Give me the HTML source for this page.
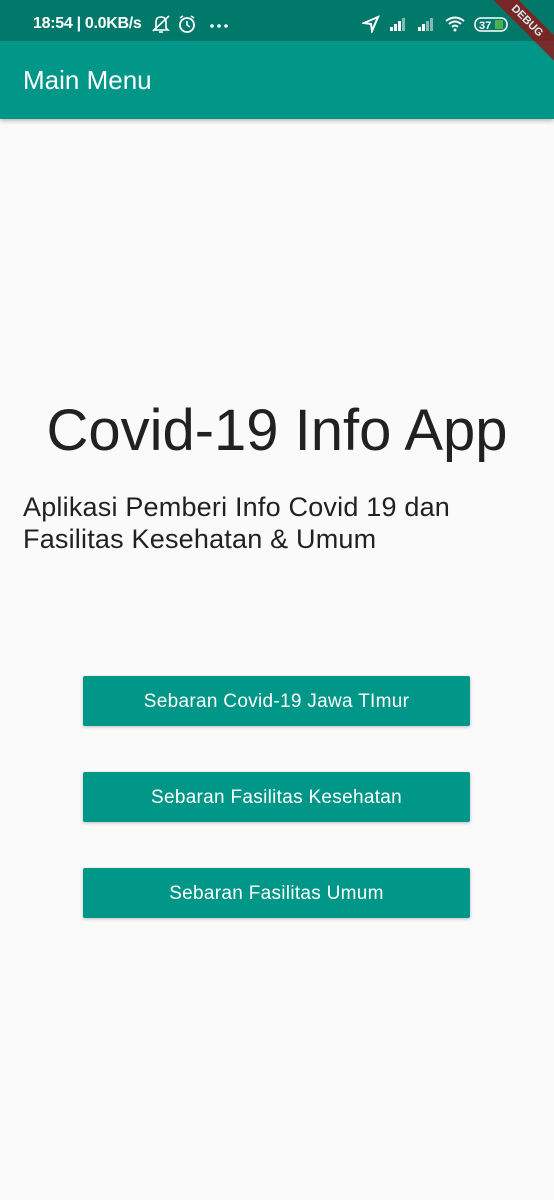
<!DOCTYPE html>
<html><head><meta charset="utf-8"><style>
*{margin:0;padding:0;box-sizing:border-box}
body{width:554px;height:1200px;background:#fafafa;font-family:"Liberation Sans",sans-serif;position:relative;overflow:hidden}
.sb{position:absolute;top:0;left:0;width:554px;height:41px;background:#00796b;color:#fff;font-weight:bold;font-size:16px}
.ab{position:absolute;top:41px;left:0;width:554px;height:78px;background:#009688;box-shadow:0 2px 4px rgba(0,0,0,.25)}
.ab span{position:absolute;left:23px;top:24px;color:#fff;font-size:26px}
.t{position:absolute;top:397px;left:0;width:554px;text-align:center;font-size:58px;color:#212121}
.s{position:absolute;top:491px;left:23px;font-size:27px;line-height:32px;color:#212121;letter-spacing:0.2px}
.b{position:absolute;left:83px;width:387px;height:50px;background:#009688;color:#fff;font-size:19px;text-align:center;line-height:52px;border-radius:2px;box-shadow:0 1px 3px rgba(0,0,0,.25);letter-spacing:0.3px}
.dbg{position:absolute;top:12px;right:-28px;width:110px;height:18px;background:#8b1a1a;opacity:.85;color:#fff;font-size:11px;font-weight:bold;text-align:center;line-height:18px;transform:rotate(45deg)}
</style></head><body>
<div class="sb">
<span style="position:absolute;left:33px;top:15px;letter-spacing:-0.3px">18:54 | 0.0KB/s</span>
<svg style="position:absolute;left:150px;top:14px" width="90" height="20">
<path d="M6 14 L6 8 Q6 3 11 3 Q16 3 16 8 L16 14 L18 16 L4 16 Z M9 18 L13 18" stroke="#fff" stroke-width="1.6" fill="none"/>
<path d="M3 17 L19 2" stroke="#fff" stroke-width="1.6"/>
<circle cx="37" cy="11" r="7" stroke="#fff" stroke-width="1.8" fill="none"/>
<path d="M37 7 L37 11 L40 13 M30 4 L33 2 M44 4 L41 2" stroke="#fff" stroke-width="1.6" fill="none"/>
<circle cx="62" cy="12" r="1.8" fill="#fff"/><circle cx="69" cy="12" r="1.8" fill="#fff"/><circle cx="76" cy="12" r="1.8" fill="#fff"/>
</svg>
<svg style="position:absolute;left:362px;top:15px" width="160" height="18">
<path d="M2 8 L16 2 L10 16 L9 9 Z" fill="none" stroke="#fff" stroke-width="2"/>
<rect x="28" y="12" width="3" height="4" fill="#fff"/><rect x="32" y="9" width="3" height="7" fill="#fff"/><rect x="36" y="6" width="3" height="10" fill="#fff"/><rect x="40" y="3" width="3" height="13" fill="#fff" opacity=".5"/>
<rect x="56" y="12" width="3" height="4" fill="#fff"/><rect x="60" y="9" width="3" height="7" fill="#fff"/><rect x="64" y="6" width="3" height="10" fill="#fff" opacity=".5"/><rect x="68" y="3" width="3" height="13" fill="#fff" opacity=".5"/>
<path d="M84 6 Q93 -1 102 6 M87 9 Q93 4 99 9 M90 12 Q93 9 96 12" stroke="#fff" stroke-width="2" fill="none"/><circle cx="93" cy="15" r="1.5" fill="#fff"/>
<rect x="113" y="3" width="32" height="13" rx="6" fill="none" stroke="#fff" stroke-width="1.5"/>
<text x="117" y="14" fill="#fff" font-size="11" font-family="Liberation Sans" font-weight="bold">37</text>
<rect x="133" y="5" width="8" height="9" fill="#4caf50"/>
</svg>
</div>
<div class="ab"><span>Main Menu</span></div>
<div class="dbg">DEBUG</div>
<div class="t">Covid-19 Info App</div>
<div class="s">Aplikasi Pemberi Info Covid 19 dan<br>Fasilitas Kesehatan &amp; Umum</div>
<div class="b" style="top:676px">Sebaran Covid-19 Jawa TImur</div>
<div class="b" style="top:772px">Sebaran Fasilitas Kesehatan</div>
<div class="b" style="top:868px">Sebaran Fasilitas Umum</div>
</body></html>
